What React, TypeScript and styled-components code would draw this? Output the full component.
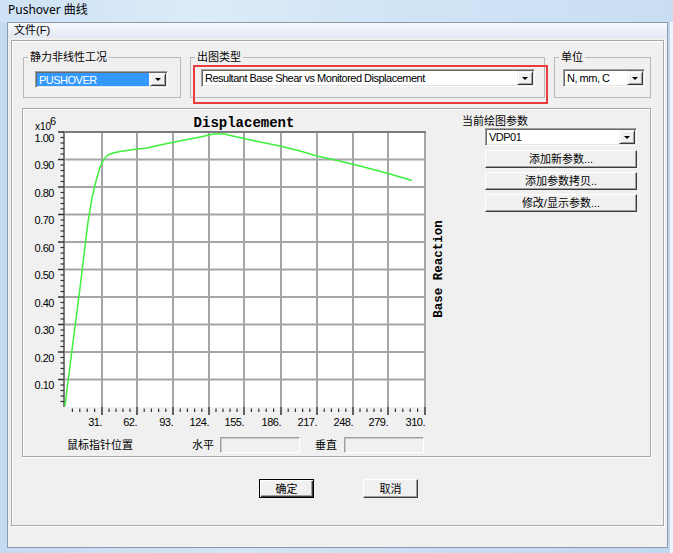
import React from "react";
import styled, { createGlobalStyle, css } from "styled-components";

const UI = `"Liberation Sans", "Noto Sans CJK SC", sans-serif`;
const MONO = `"Liberation Mono", "DejaVu Sans Mono", monospace`;

const GlobalStyle = createGlobalStyle`
  html, body { margin: 0; padding: 0; }
  body { width: 673px; height: 553px; overflow: hidden; background: #eef4fb; font-family: ${UI}; }
  * { box-sizing: border-box; }
`;

const Desktop = styled.div`
  width: 673px;
  height: 553px;
  display: flex;
  flex-direction: column;
  background: linear-gradient(90deg, #c4dbf1 0, #d3e5f6 35%, #cadff3 60%, #c0d8ef 670px, #eef4fb 670px);
`;

const TitleBar = styled.div`
  height: 22px;
  flex: none;
  padding: 2px 0 0 8px;
  font: 12px/16px "Noto Sans", "Noto Sans CJK SC", sans-serif;
  color: #000;
  background: linear-gradient(90deg, #cde2f5 0, #dcebf8 30%, #d2e5f6 55%, #c9def3 100%);
`;

const Client = styled.div`
  margin-left: 7px;
  width: 661px;
  height: 526px;
  border: 1px solid #8c99a8;
  display: flex;
  flex-direction: column;
  background: #f0f0f0;
`;

const MenuBar = styled.div`
  height: 15px;
  flex: none;
  padding-left: 6px;
  font: 11px/15px ${UI};
  color: #000;
  background: linear-gradient(#f6f8fc, #e2e7f2);
`;

const DialogBody = styled.div`
  flex: 1;
  padding: 2px 3px 21px 3px;
  display: flex;
`;

const OuterFrame = styled.div`
  flex: 1;
  border: 1px solid #a8a8a8;
  box-shadow: inset 1px 1px 0 #fff, 1px 1px 0 #fff;
  padding: 9px 10px 0 10px;
  display: flex;
  flex-direction: column;
`;

const TopRow = styled.div`
  display: flex;
  gap: 9px;
  padding-left: 1px;
  align-items: flex-start;
`;

const Group = styled.fieldset<{ $w: number; $pl: number; $pt: number }>`
  margin: 0;
  min-width: 0;
  width: ${(p) => p.$w}px;
  height: 48px;
  border: 1px solid #b8b8b8;
  padding: ${(p) => p.$pt}px 0 0 ${(p) => p.$pl}px;
  & > legend {
    margin-left: ${(p) => 4 - p.$pl}px;
  }
`;

const Legend = styled.legend`
  padding: 0 2px;
  font: 11px/14px ${UI};
  color: #000;
`;

const Annotated = styled.div`
  position: relative;
`;

const RedMark = styled.div`
  position: absolute;
  z-index: 2;
  left: 3px;
  top: 15px;
  width: 355px;
  height: 39px;
  border: 2px solid rgb(235, 60, 60);
  pointer-events: none;
`;

const Combo = styled.div<{ $w: number; $h?: number }>`
  width: ${(p) => p.$w}px;
  height: ${(p) => p.$h ?? 18}px;
  display: flex;
  align-items: stretch;
  padding: 1px;
  background: #fff;
  border: 1px solid;
  border-color: #a0a0a0 #fff #fff #a0a0a0;
  box-shadow: inset 1px 1px 0 #696969, inset -1px -1px 0 #e3e3e3;
`;

const ComboText = styled.div<{ $selected?: boolean }>`
  flex: 1;
  min-width: 0;
  padding-left: 2px;
  font: 11px/14px ${UI};
  letter-spacing: -0.5px;
  color: #000;
  white-space: nowrap;
  overflow: hidden;
  display: flex;
  align-items: center;
  ${(p) =>
    p.$selected &&
    css`
      background: #3399ff;
      color: #fff;
      margin: 0 1px 0 0;
    `}
`;

const DropButton = styled.div`
  width: 16px;
  flex: none;
  display: flex;
  align-items: center;
  justify-content: center;
  background: #f0f0f0;
  border: 1px solid;
  border-color: #f0f0f0 #3c3c3c #3c3c3c #f0f0f0;
  box-shadow: inset 1px 1px 0 #fff, inset -1px -1px 0 #a0a0a0;
  &::after {
    content: "";
    width: 0;
    height: 0;
    border-left: 3px solid transparent;
    border-right: 3px solid transparent;
    border-top: 3px solid #000;
  }
`;

const ChartPanel = styled.div`
  margin-top: 10px;
  width: 629px;
  height: 349px;
  border: 1px solid #a8a8a8;
  box-shadow: inset 1px 1px 0 #fff, 1px 1px 0 #fff;
  display: flex;
`;

const ChartCol = styled.div`
  width: 423px;
  flex: none;
  display: flex;
  flex-direction: column;
`;

const ChartSvg = styled.svg`
  display: block;
  flex: none;
`;

const PointerRow = styled.div`
  margin-top: 2px;
  height: 16px;
  padding-left: 44px;
  display: grid;
  grid-template-columns: 125px 28px 80px 44px 80px;
  align-items: center;
  font: 11px/14px ${UI};
  color: #000;
`;

const RowLabel = styled.span<{ $pl?: number }>`
  padding-left: ${(p) => p.$pl ?? 0}px;
  white-space: nowrap;
`;

const ReadOnlyField = styled.div`
  height: 16px;
  background: #f0f0f0;
  border: 1px solid;
  border-color: #a0a0a0 #fff #fff #a0a0a0;
  box-shadow: inset 1px 1px 0 #c8c8c8;
`;

const SidePanel = styled.div`
  flex: 1;
  padding: 5px 0 0 16px;
  display: flex;
  flex-direction: column;
  align-items: flex-start;
`;

const SideLabel = styled.div`
  font: 11px/14px ${UI};
  color: #000;
`;

const SideStack = styled.div`
  margin-left: 23px;
  display: flex;
  flex-direction: column;
  gap: 4px;
`;

const PushButton = styled.button<{ $w: number; $h: number; $default?: boolean }>`
  width: ${(p) => p.$w}px;
  height: ${(p) => p.$h}px;
  margin: 0;
  padding: 0;
  font: 11px/14px ${UI};
  color: #000;
  background: #f0f0f0;
  border: 1px solid;
  border-color: #fff #3c3c3c #3c3c3c #fff;
  box-shadow: inset -1px -1px 0 #a0a0a0;
  ${(p) =>
    p.$default &&
    css`
      border-color: #000;
      box-shadow: inset 1px 1px 0 #fff, inset -1px -1px 0 #3c3c3c, inset -2px -2px 0 #a0a0a0;
    `}
`;

const BottomRow = styled.div`
  margin-top: 22px;
  padding-left: 2px;
  display: flex;
  justify-content: center;
  gap: 49px;
`;

/* ---------- chart data ---------- */
const PLOT_L = 64;
const PLOT_R = 425;
const PLOT_T = 132;
const PLOT_B = 407;
const yOf = (v: number) => PLOT_B - 275 * v;
const xGrid = [102, 137, 173, 209, 244, 281, 317, 353, 388, 425];
const xLabels = ["31.", "62.", "93.", "124.", "155.", "186.", "217.", "248.", "279.", "310."];
const yVals = [0.1, 0.2, 0.3, 0.4, 0.5, 0.6, 0.7, 0.8, 0.9, 1.0];

const curve =
  "65,406 72,350 80,288 88,222 92,198 96,181 100,167 104,159 108,155 113,153 120,151.5 137,149 147,148 160,145 177,141.5 200,137 214,134 224,134 237,137 253,140.5 280,146 300,151 317,156 333,159.5 360,166 390,174 412,180.5";

function Chart() {
  const xStarts = [65, ...xGrid];
  const xMinor: number[] = [];
  for (let i = 0; i < xGrid.length; i++) {
    const a = xStarts[i];
    const b = xStarts[i + 1];
    for (let k = 1; k <= 4; k++) xMinor.push(a + ((b - a) * k) / 5);
  }
  const yMinor: number[] = [];
  for (let k = 1; k <= 50; k++) if (k % 5 !== 0) yMinor.push(PLOT_B - 5.5 * k);

  return (
    <ChartSvg width={423} height={326} viewBox="23 109 423 326">
      <text x={35} y={129.5} fontFamily="Liberation Sans, sans-serif" fontSize={10} fill="#000">
        x10
      </text>
      <text x={50} y={125} fontFamily="Liberation Sans, sans-serif" fontSize={11} fill="#000">
        6
      </text>
      <text
        x={244}
        y={127}
        textAnchor="middle"
        fontFamily={MONO}
        fontWeight="bold"
        fontSize={14}
        fill="#000"
      >
        Displacement
      </text>

      <rect x={PLOT_L} y={PLOT_T} width={PLOT_R - PLOT_L} height={PLOT_B - PLOT_T} fill="#fff" />
      {yVals.slice(0, 9).map((v) => (
        <line key={v} x1={PLOT_L} x2={PLOT_R} y1={yOf(v)} y2={yOf(v)} stroke="#a6a6a6" strokeWidth={2} />
      ))}
      {xGrid.map((x) => (
        <line key={x} x1={x} x2={x} y1={PLOT_T} y2={PLOT_B} stroke="#a6a6a6" strokeWidth={2} />
      ))}
      <line x1={PLOT_L} x2={PLOT_R + 1} y1={PLOT_T} y2={PLOT_T} stroke="#7c7c7c" strokeWidth={2} />
      <line x1={PLOT_L} x2={PLOT_L} y1={PLOT_T - 1} y2={PLOT_B} stroke="#7c7c7c" strokeWidth={2} />

      {yVals.map((v) => (
        <line key={"ym" + v} x1={58} x2={64} y1={yOf(v)} y2={yOf(v)} stroke="#333" strokeWidth={1.5} />
      ))}
      {yMinor.map((y) => (
        <line key={"yn" + y} x1={60.5} x2={64} y1={y} y2={y} stroke="#333" strokeWidth={1.2} />
      ))}
      {xGrid.map((x) => (
        <line key={"xm" + x} x1={x} x2={x} y1={407} y2={415} stroke="#333" strokeWidth={1.5} />
      ))}
      {xMinor.map((x) => (
        <line key={"xn" + x} x1={x} x2={x} y1={408.5} y2={412} stroke="#333" strokeWidth={1.2} />
      ))}

      {yVals.map((v) => (
        <text
          key={"yl" + v}
          x={54}
          y={yOf(v) + 9.5}
          textAnchor="end"
          fontFamily="Liberation Sans, sans-serif"
          fontSize={11}
          letterSpacing={-0.5}
          fill="#000"
        >
          {v.toFixed(2)}
        </text>
      ))}
      {xGrid.map((x, i) => (
        <text
          key={"xl" + x}
          x={x}
          y={425.5}
          textAnchor="end"
          fontFamily="Liberation Sans, sans-serif"
          fontSize={11}
          letterSpacing={-0.5}
          fill="#000"
        >
          {xLabels[i]}
        </text>
      ))}

      <text
        x={442}
        y={269}
        textAnchor="middle"
        transform="rotate(-90 442 269)"
        fontFamily={MONO}
        fontWeight="bold"
        fontSize={12.5}
        fill="#000"
      >
        Base Reaction
      </text>

      <polyline points={curve} fill="none" stroke="#3cf03c" strokeWidth={1.5} strokeLinejoin="round" />
    </ChartSvg>
  );
}

export default function App() {
  return (
    <>
      <GlobalStyle />
      <Desktop>
        <TitleBar>Pushover 曲线</TitleBar>
        <Client>
          <MenuBar>文件(F)</MenuBar>
          <DialogBody>
            <OuterFrame>
              <TopRow>
                <Group $w={158} $pl={11} $pt={7}>
                  <Legend>静力非线性工况</Legend>
                  <Combo $w={133} $h={17}>
                    <ComboText $selected>PUSHOVER</ComboText>
                    <DropButton />
                  </Combo>
                </Group>
                <Annotated>
                  <Group $w={355} $pl={10} $pt={5}>
                    <Legend>出图类型</Legend>
                    <Combo $w={334}>
                      <ComboText>Resultant Base Shear vs Monitored Displacement</ComboText>
                      <DropButton />
                    </Combo>
                  </Group>
                  <RedMark />
                </Annotated>
                <Group $w={97} $pl={8} $pt={5}>
                  <Legend>单位</Legend>
                  <Combo $w={82}>
                    <ComboText>N, mm, C</ComboText>
                    <DropButton />
                  </Combo>
                </Group>
              </TopRow>

              <ChartPanel>
                <ChartCol>
                  <Chart />
                  <PointerRow>
                    <RowLabel>鼠标指针位置</RowLabel>
                    <RowLabel>水平</RowLabel>
                    <ReadOnlyField />
                    <RowLabel $pl={15}>垂直</RowLabel>
                    <ReadOnlyField />
                  </PointerRow>
                </ChartCol>
                <SidePanel>
                  <SideLabel>当前绘图参数</SideLabel>
                  <SideStack>
                    <Combo $w={152}>
                      <ComboText>VDP01</ComboText>
                      <DropButton />
                    </Combo>
                    <PushButton $w={152} $h={18}>添加新参数...</PushButton>
                    <PushButton $w={152} $h={18}>添加参数拷贝..</PushButton>
                    <PushButton $w={152} $h={18}>修改/显示参数...</PushButton>
                  </SideStack>
                </SidePanel>
              </ChartPanel>

              <BottomRow>
                <PushButton $w={55} $h={19} $default>
                  确定
                </PushButton>
                <PushButton $w={55} $h={19}>
                  取消
                </PushButton>
              </BottomRow>
            </OuterFrame>
          </DialogBody>
        </Client>
      </Desktop>
    </>
  );
}
